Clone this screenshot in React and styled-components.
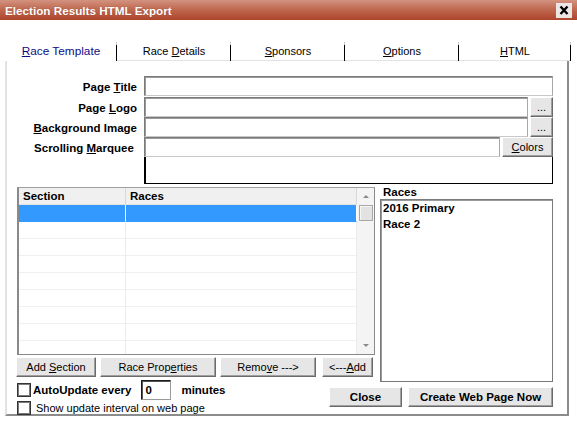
import React from "react";
import styled, { createGlobalStyle } from "styled-components";

const GlobalStyle = createGlobalStyle`
  html, body {
    margin: 0;
    padding: 0;
    background: #ffffff;
  }
  * {
    box-sizing: border-box;
  }
`;

const Window = styled.div`
  width: 577px;
  height: 423px;
  background: #ffffff;
  font-family: "Liberation Sans", Arial, sans-serif;
  color: #000;
  overflow: hidden;
`;

const TitleBar = styled.div`
  height: 20px;
  display: flex;
  align-items: center;
  justify-content: space-between;
  padding: 0 5px 0 5px;
  background: linear-gradient(to bottom, #d3937f 0%, #c06a52 45%, #ad452b 100%);
`;

const Title = styled.span`
  color: #ffffff;
  font-weight: 700;
  font-size: 11.7px;
  text-shadow: 0 0 1px rgba(90, 20, 10, 0.4);
`;

const CloseBox = styled.div`
  width: 16px;
  height: 15px;
  display: flex;
  margin-top: 1px;
`;

const TabStrip = styled.div`
  display: flex;
  margin: 22px 0 0 5px;
  height: 19px;
`;

const Tab = styled.div`
  position: relative;
  width: ${({ $w }) => $w}px;
  height: 19px;
  display: flex;
  align-items: center;
  justify-content: center;
  padding-bottom: 1px;
  font-size: ${({ $active }) => ($active ? "11.8px" : "11px")};
  color: ${({ $active }) => ($active ? "#0c0c86" : "#000")};
  border-bottom: 1px solid ${({ $active }) => ($active ? "transparent" : "#e3e3e3")};

  &::after {
    content: "";
    position: absolute;
    right: 0;
    top: 3px;
    bottom: -1px;
    width: 1px;
    background: #000;
  }
  &::before {
    content: "";
    position: absolute;
    right: 0;
    top: 0;
    height: 3px;
    width: 1px;
    background: #c8c8c8;
  }
`;

const Panel = styled.div`
  margin-left: 5px;
  width: 564px;
  height: 355px;
  border-left: 2px solid #e3e3e3;
  border-right: 2px solid #8c8c8c;
  border-bottom: 2px solid #8c8c8c;
  padding: 15px 14px 0 0;
`;

const Form = styled.div`
  display: grid;
  grid-template-columns: 130px 1fr;
  grid-template-rows: 21px 20px 20px 20px 27px;
  column-gap: 7px;
`;

const Label = styled.div`
  font-weight: 700;
  font-size: 11.5px;
  text-align: right;
  align-self: center;
  white-space: nowrap;
  padding-top: 1px;
`;

const Field = styled.div`
  display: flex;
  align-items: stretch;
  gap: 2px;
  min-width: 0;
  padding-bottom: ${({ $pb }) => $pb || 0}px;
`;

const TextInput = styled.div`
  flex: 1;
  background: #fff;
  border: 1px solid #7a7a7a;
  border-right-color: #a8a8a8;
  border-bottom-color: #c8c8c8;
  box-shadow: inset 1px 1px 0 #9a9a9a;
`;

const MemoBox = styled.div`
  flex: 1;
  background: #fff;
  border: 1px solid #000;
  border-left-width: 2px;
  border-top: none;
`;

const Button = styled.button`
  display: flex;
  align-items: center;
  justify-content: center;
  width: ${({ $w }) => $w}px;
  height: 20px;
  padding: 0;
  margin: 0 0 0 ${({ $ml }) => $ml || 0}px;
  font-family: "Liberation Sans", Arial, sans-serif;
  font-size: ${({ $bold }) => ($bold ? "11.5px" : "11px")};
  font-weight: ${({ $bold }) => ($bold ? 700 : 400)};
  color: #000;
  background: #e6e6e6;
  border: 1px solid;
  border-color: #ffffff #6a6a6a #6a6a6a #ffffff;
  box-shadow: inset -1px -1px 0 #a0a0a0;
  flex-shrink: 0;
`;

const Middle = styled.div`
  display: flex;
  align-items: flex-start;
  margin-top: 3px;
  padding-left: 10px;
`;

const LeftCol = styled.div`
  width: 358px;
  display: flex;
  flex-direction: column;
`;

const Grid = styled.div`
  height: 168px;
  display: flex;
  border: 1px solid #8a8a8a;
  border-left-width: 2px;
  border-top-color: #a0a0a0;
  background: #fff;
  overflow: hidden;
`;

const Table = styled.div`
  flex: 1;
  display: grid;
  grid-template-columns: 107px 1fr;
  grid-auto-rows: 17px;
  align-content: start;
  overflow: hidden;
`;

const HeadCell = styled.div`
  background: #f0f0f0;
  border-bottom: 1px solid #e2e2e2;
  border-right: 1px solid #d8d8d8;
  font-weight: 700;
  font-size: 11.5px;
  padding: 2px 0 0 4px;
`;

const Cell = styled.div`
  background: ${({ $sel }) => ($sel ? "#3399ff" : "#fff")};
  border-bottom: 1px solid ${({ $sel }) => ($sel ? "#3399ff" : "#f0f0f0")};
  border-right: 1px solid ${({ $sel }) => ($sel ? "#ffffff" : "#ececec")};
`;

const Scrollbar = styled.div`
  width: 17px;
  display: flex;
  flex-direction: column;
  align-items: center;
  background: #f4f4f4;
`;

const Arrow = styled.div`
  height: 17px;
  display: flex;
  align-items: center;
  justify-content: center;

  &::before {
    content: "";
    border-left: 3px solid transparent;
    border-right: 3px solid transparent;
    ${({ $down }) =>
      $down ? "border-top: 3px solid #8a8a8a;" : "border-bottom: 3px solid #8a8a8a;"}
  }
`;

const Thumb = styled.div`
  width: 14px;
  height: 16px;
  background: #e2e2e2;
  border: 1px solid #a8a8a8;
  box-shadow: inset 1px 1px 0 #f6f6f6;
`;

const Track = styled.div`
  flex: 1;
`;

const ButtonRow = styled.div`
  display: flex;
  margin: 2px 0 0 -1px;
`;

const RightCol = styled.div`
  width: 173px;
  margin-left: 5px;
  display: flex;
  flex-direction: column;
`;

const ListLabel = styled.div`
  height: 12px;
  line-height: 10px;
  font-weight: 700;
  font-size: 11.5px;
  padding-left: 3px;
`;

const ListBox = styled.div`
  height: 183px;
  border: 1px solid #7a7a7a;
  box-shadow: inset 1px 1px 0 #9a9a9a;
  background: #fff;
  padding: 1px 2px;
`;

const ListItem = styled.div`
  font-weight: 700;
  font-size: 11.5px;
  height: 16px;
  line-height: 14px;
`;

const Bottom = styled.div`
  display: flex;
  margin-top: -2px;
  padding-left: 10px;
`;

const Options = styled.div`
  display: flex;
  flex-direction: column;
`;

const OptionRow = styled.label`
  display: flex;
  align-items: center;
  height: ${({ $h }) => $h}px;
  font-size: ${({ $bold }) => ($bold ? "11.5px" : "11px")};
  font-weight: ${({ $bold }) => ($bold ? 700 : 400)};
  white-space: nowrap;
`;

const Check = styled.span`
  width: 14px;
  height: 14px;
  border: 1px solid #333;
  box-shadow: inset 0 0 0 1px #7a7a7a;
  background: #fff;
  margin-right: ${({ $gap }) => $gap}px;
  flex-shrink: 0;
`;

const NumberBox = styled.div`
  width: 30px;
  height: 20px;
  margin: 0 10px;
  border: 1px solid #1a1a1a;
  border-right-color: #9a9a9a;
  border-bottom-color: #9a9a9a;
  box-shadow: inset 1px 1px 0 #555;
  font-weight: 700;
  font-size: 11.5px;
  padding: 3px 0 0 3px;
  background: #fff;
`;

const Actions = styled.div`
  margin-left: auto;
  display: flex;
  gap: 6px;
  padding-top: 7px;
`;

const tabs = [
  { key: "R", rest: "ace Template", w: 112, active: true },
  { pre: "Race ", key: "D", rest: "etails", w: 114 },
  { key: "S", rest: "ponsors", w: 114 },
  { key: "O", rest: "ptions", w: 114 },
  { key: "H", rest: "TML", w: 112 },
];

const App = () => {
  const rows = Array.from({ length: 9 });

  return (
    <Window>
      <GlobalStyle />
      <TitleBar>
        <Title>Election Results HTML Export</Title>
        <CloseBox>
          <svg width="16" height="15" viewBox="0 0 16 15">
            <rect x="0" y="0" width="16" height="15" fill="#ece6e4" />
            <path d="M4.5 3.5 L11.5 11 M11.5 3.5 L4.5 11" stroke="#000" strokeWidth="2.4" />
          </svg>
        </CloseBox>
      </TitleBar>

      <TabStrip>
        {tabs.map((t, i) => (
          <Tab key={i} $w={t.w} $active={t.active}>
            <span>
              {t.pre}
              <u>{t.key}</u>
              {t.rest}
            </span>
          </Tab>
        ))}
      </TabStrip>

      <Panel>
        <Form>
          <Label>
            Page <u>T</u>itle
          </Label>
          <Field $pb={1}>
            <TextInput />
          </Field>

          <Label>
            Page <u>L</u>ogo
          </Label>
          <Field>
            <TextInput />
            <Button $w={23}>...</Button>
          </Field>

          <Label>
            <u>B</u>ackground Image
          </Label>
          <Field>
            <TextInput />
            <Button $w={23}>...</Button>
          </Field>

          <Label>
            Scrolling <u>M</u>arquee&nbsp;
          </Label>
          <Field>
            <TextInput />
            <Button $w={51}>
              <span>
                <u>C</u>olors
              </span>
            </Button>
          </Field>

          <span />
          <Field>
            <MemoBox />
          </Field>
        </Form>

        <Middle>
          <LeftCol>
            <Grid>
              <Table>
                <HeadCell>Section</HeadCell>
                <HeadCell>Races</HeadCell>
                {rows.map((_, i) => (
                  <React.Fragment key={i}>
                    <Cell $sel={i === 0} />
                    <Cell $sel={i === 0} />
                  </React.Fragment>
                ))}
              </Table>
              <Scrollbar>
                <Arrow />
                <Thumb />
                <Track />
                <Arrow $down />
              </Scrollbar>
            </Grid>
            <ButtonRow>
              <Button $w={80}>
                <span>
                  Add <u>S</u>ection
                </span>
              </Button>
              <Button $w={116} $ml={4}>
                <span>
                  Race Prop<u>e</u>rties
                </span>
              </Button>
              <Button $w={96} $ml={4}>
                <span>
                  Remo<u>v</u>e ---&gt;
                </span>
              </Button>
              <Button $w={51} $ml={6}>
                <span>
                  &lt;---<u>A</u>dd
                </span>
              </Button>
            </ButtonRow>
          </LeftCol>

          <RightCol>
            <ListLabel>Races</ListLabel>
            <ListBox>
              <ListItem>2016 Primary</ListItem>
              <ListItem>Race 2</ListItem>
            </ListBox>
          </RightCol>
        </Middle>

        <Bottom>
          <Options>
            <OptionRow $h={20} $bold>
              <Check $gap={2} />
              AutoUpdate every
              <NumberBox>0</NumberBox>
              minutes
            </OptionRow>
            <OptionRow $h={16}>
              <Check $gap={5} />
              Show update interval on web page
            </OptionRow>
          </Options>
          <Actions>
            <Button $w={73} $bold>
              Close
            </Button>
            <Button $w={145} $bold>
              Create Web Page Now
            </Button>
          </Actions>
        </Bottom>
      </Panel>
    </Window>
  );
};

export default App;
